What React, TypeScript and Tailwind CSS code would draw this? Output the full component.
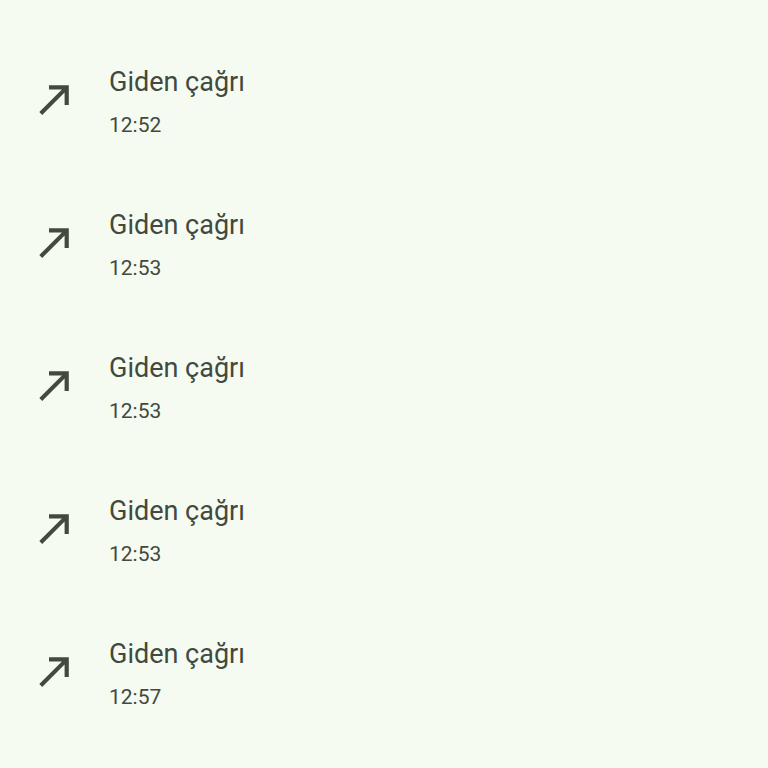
import React from 'react';

interface Call {
  id: number;
  label: string;
  time: string;
}

const calls: Call[] = [
  { id: 1, label: 'Giden çağrı', time: '12:52' },
  { id: 2, label: 'Giden çağrı', time: '12:53' },
  { id: 3, label: 'Giden çağrı', time: '12:53' },
  { id: 4, label: 'Giden çağrı', time: '12:53' },
  { id: 5, label: 'Giden çağrı', time: '12:57' },
];

const OutgoingIcon: React.FC = () => (
  <svg viewBox="0 0 30 30" className="h-[30px] w-[30px] shrink-0" fill="currentColor" aria-hidden="true">
    <path d="M3.2 30 L0.3 27.1 L22.9 4.4 H10 V0.3 H29.8 V20 H25.6 V7.4 Z" />
  </svg>
);

const CallHistory: React.FC = () => {
  return (
    <main className="min-h-screen bg-[#f5fbf1] pt-7 font-['Roboto',sans-serif] text-[#42493f]">
      <ul>
        {calls.map((call) => (
          <li key={call.id} className="flex h-[143px] items-center gap-10 px-[39px]">
            <OutgoingIcon />
            <div className="pt-1.5">
              <p className="text-[27px] leading-[44px]">{call.label}</p>
              <p className="text-[21px] leading-[42px]">{call.time}</p>
            </div>
          </li>
        ))}
      </ul>
    </main>
  );
};

export default CallHistory;
